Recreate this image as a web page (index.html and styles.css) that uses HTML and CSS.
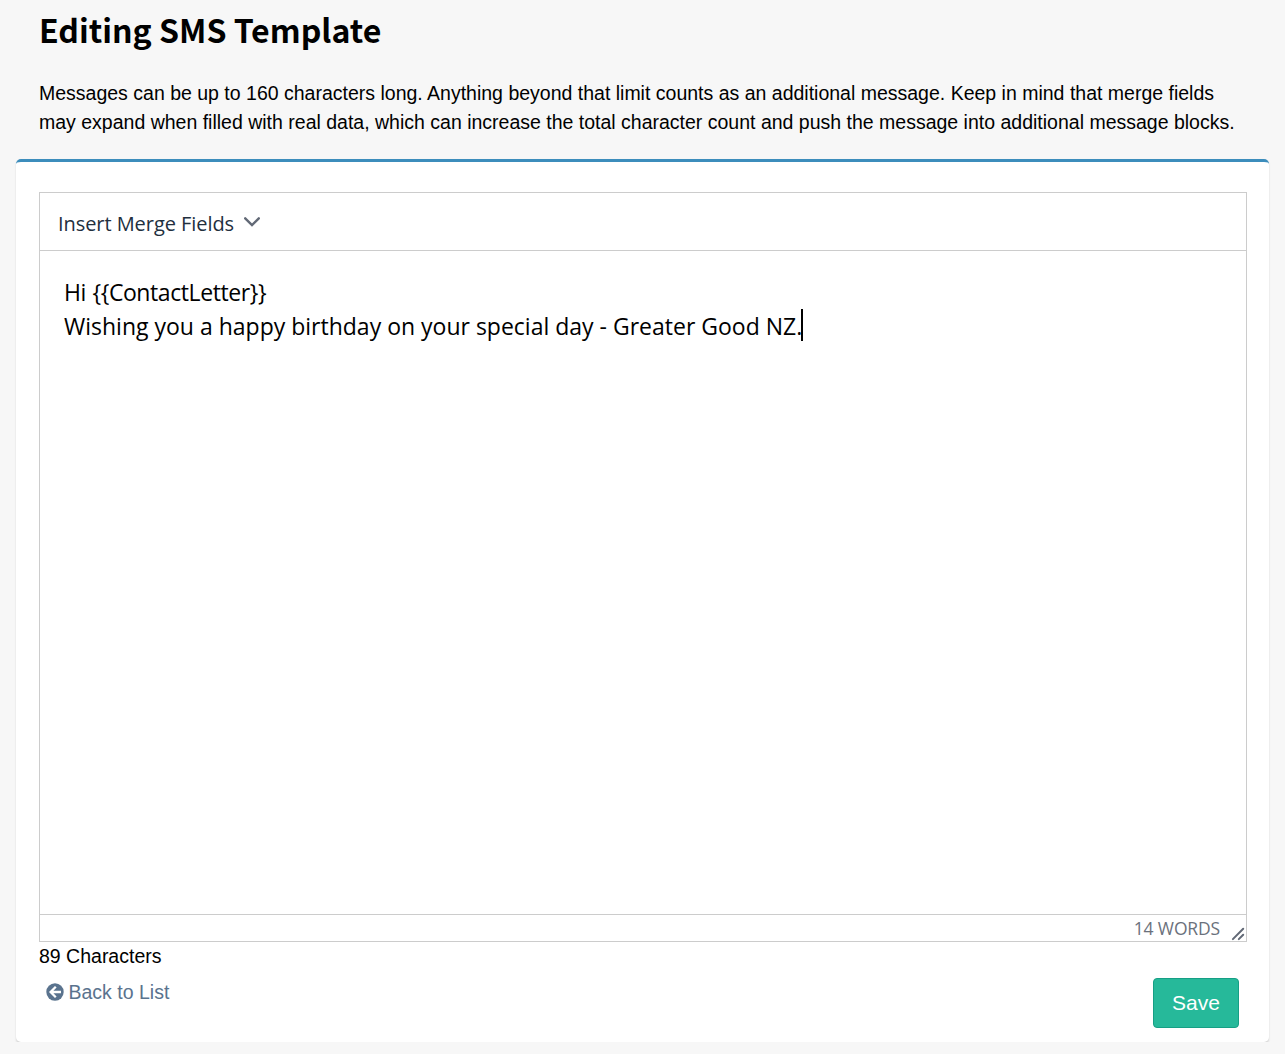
FILE: index.html
```html
<!DOCTYPE html>
<html lang="en">
<head>
    <meta charset="UTF-8">
    <meta name="viewport" content="width=device-width, initial-scale=1.0">
    <title>Editing SMS Template</title>
    <link rel="stylesheet" href="styles.css">
</head>
<body>
    <header class="page-header">
        <h1>Editing SMS Template</h1>
        <p>Messages can be up to 160 characters long. Anything beyond that limit counts as an additional message. Keep in mind that merge fields<br>
        may expand when filled with real data, which can increase the total character count and push the message into additional message blocks.</p>
    </header>

    <main class="box">
        <div class="editor">
            <div class="toolbar">
                <button type="button" class="merge-button">
                    <span>Insert Merge Fields</span>
                    <svg class="chevron" width="16" height="10" viewBox="0 0 16 10">
                        <path d="M1.2 1.3 8 8.1l6.8-6.8" fill="none" stroke="#626976" stroke-width="2.4" stroke-linecap="round"/>
                    </svg>
                </button>
            </div>
            <div class="content">
                <p class="greeting">Hi {{ContactLetter}}</p>
                <p class="message">Wishing you a happy birthday on your special day - Greater Good NZ.<span class="caret"></span></p>
            </div>
            <div class="statusbar">
                <span class="words">14 WORDS</span>
                <svg class="resize" width="14" height="14" viewBox="0 0 14 14">
                    <path d="M1.9 12.1 12.2 1.8M7.8 12.1l4.4-4.4" fill="none" stroke="#626976" stroke-width="2" stroke-linecap="round"/>
                </svg>
            </div>
        </div>
        <div class="char-count">89 Characters</div>
        <div class="actions">
            <a class="back" href="#">
                <svg width="18" height="18" viewBox="0 0 18 18">
                    <circle cx="9" cy="9" r="8.7" fill="#5a738e"/>
                    <path d="M9.8 3.8 4.6 9l5.2 5.2M5 9h10" fill="none" stroke="#fff" stroke-width="2.3"/>
                </svg>
                <span>Back to List</span>
            </a>
            <button type="button" class="save">Save</button>
        </div>
    </main>
</body>
</html>
```

FILE: styles.css
```css
* {
    box-sizing: border-box;
}

body {
    margin: 0;
    padding: 0 16px;
    background: #f7f7f7;
    color: #000;
    font-family: "Liberation Sans", Arial, sans-serif;
    font-size: 19.5px;
}

.page-header {
    height: 159px;
    padding: 6px 0 0 23px;
}

h1 {
    margin: 0;
    font-family: "Noto Sans CJK SC", sans-serif;
    font-size: 32.1px;
    font-weight: 700;
    line-height: 46px;
}

p {
    margin: 0;
}

.page-header p {
    padding-top: 27px;
    line-height: 29px;
    white-space: nowrap;
}

.box {
    height: 883px;
    padding: 30px 22px 0 23px;
    background: #fff;
    border-top: 3px solid #3c8dbc;
    border-radius: 5px;
    box-shadow: 0 1.5px 2px rgba(0, 0, 0, 0.14);
}

.editor {
    display: flex;
    flex-direction: column;
    height: 750px;
    border: 1px solid #ccc;
    font-family: "Open Sans", "Noto Sans", sans-serif;
}

.toolbar {
    display: flex;
    align-items: center;
    height: 58px;
    padding-left: 18px;
    border-bottom: 1px solid #ccc;
}

.merge-button {
    display: flex;
    align-items: center;
    gap: 10px;
    padding: 3px 0 0;
    background: none;
    border: 0;
    color: #222f3e;
    font-family: inherit;
    font-size: 20px;
    letter-spacing: -0.06px;
}

.chevron {
    margin-top: -3px;
}

.content {
    flex: 1;
    padding: 24px;
    font-size: 23px;
    line-height: 34px;
    white-space: nowrap;
}

.greeting {
    letter-spacing: -0.42px;
    word-spacing: 1px;
}

.caret {
    display: inline-block;
    width: 2px;
    height: 32px;
    margin: -4px 0 0 -1px;
    background: #000;
    vertical-align: -6px;
}

.statusbar {
    display: flex;
    align-items: center;
    justify-content: flex-end;
    gap: 11px;
    height: 27px;
    border-top: 1px solid #ccc;
    color: #6b717c;
    font-size: 17.5px;
}

.words {
    letter-spacing: -0.15px;
}

.resize {
    align-self: flex-end;
    margin-right: 1px;
}

.char-count {
    line-height: 28px;
}

.actions {
    display: flex;
    justify-content: space-between;
    align-items: flex-start;
    padding: 8px 8px 0 7px;
}

.back {
    display: flex;
    align-items: center;
    gap: 5px;
    margin-left: -0.5px;
    line-height: 28px;
    color: #5a738e;
    text-decoration: none;
}

.save {
    width: 86px;
    height: 50px;
    background: #26b99a;
    border: 1px solid #169f85;
    border-radius: 4px;
    color: #fff;
    font-family: inherit;
    font-size: 21px;
}
```
